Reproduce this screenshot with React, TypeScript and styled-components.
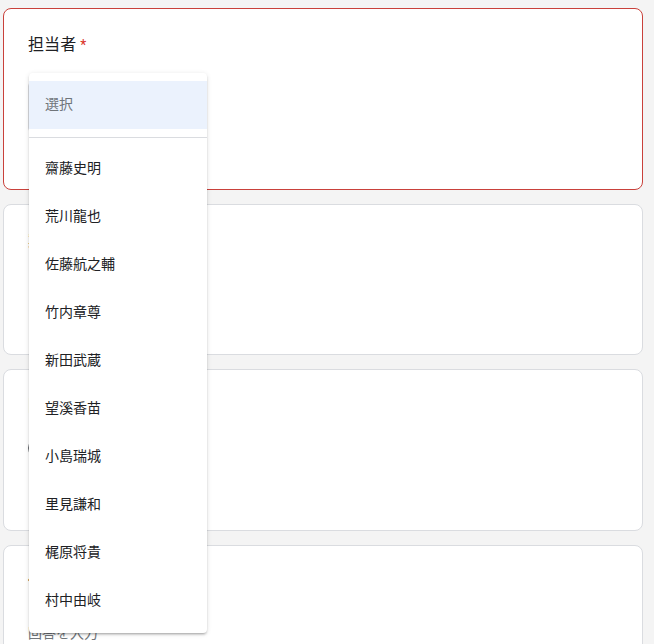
import React from 'react';
import styled, { createGlobalStyle } from 'styled-components';

const GlobalStyle = createGlobalStyle`
  html, body {
    margin: 0;
    padding: 0;
    background: #f4f4f4;
    overflow: hidden;
  }
  body {
    font-family: Roboto, "Noto Sans CJK JP", "Noto Sans", sans-serif;
    color: #202124;
  }
`;

const Page = styled.div`
  width: 640px;
  height: 644px;
  padding: 8px 11px 0 3px;
  display: flex;
  flex-direction: column;
  gap: 14px;
  position: relative;
  overflow: hidden;
`;

const Card = styled.section<{ $error?: boolean; $height?: number }>`
  flex-shrink: 0;
  box-sizing: border-box;
  height: ${(p) => (p.$height ? `${p.$height}px` : 'auto')};
  background: #fff;
  border: 1px solid ${(p) => (p.$error ? '#c9413b' : '#dadce0')};
  border-radius: 8px;
  padding: 24px;
  display: flex;
  flex-direction: column;
`;

const Title = styled.div`
  font-size: 16px;
  line-height: 24px;
  letter-spacing: 0.1px;
  color: #202124;
`;

const Required = styled.span`
  color: #d93025;
  font-size: 14px;
  margin-left: 4px;
`;

const SelectBox = styled.div`
  margin-top: 25px;
  width: 176px;
  height: 48px;
  border: 1px solid #dadce0;
  border-radius: 4px;
`;

const Answer = styled.div`
  margin-top: 16px;
  width: 50%;
  padding: 13px 0 8px;
  font-size: 14px;
  line-height: 20px;
  color: #70757a;
`;

const Option = styled.label`
  margin-top: 10px;
  display: flex;
  align-items: center;
  gap: 12px;
  height: 40px;
  font-size: 14px;
`;

const Radio = styled.span`
  width: 16px;
  height: 16px;
  border: 2px solid #5f6368;
  border-radius: 50%;
`;

const Menu = styled.ul`
  position: absolute;
  left: 29px;
  top: 73px;
  width: 178px;
  margin: 0;
  padding: 8px 0;
  list-style: none;
  background: #fff;
  border-radius: 4px;
  box-shadow: 0 2px 2px rgba(0, 0, 0, 0.14), 0 1px 5px rgba(0, 0, 0, 0.12),
    0 3px 1px -2px rgba(0, 0, 0, 0.1);
  z-index: 5;
`;

const MenuItem = styled.li<{ $placeholder?: boolean }>`
  height: 48px;
  display: flex;
  align-items: center;
  padding: 0 16px;
  font-size: 14px;
  line-height: 20px;
  padding-bottom: 2px;
  box-sizing: border-box;
  color: ${(p) => (p.$placeholder ? '#70757a' : '#202124')};
  background: ${(p) => (p.$placeholder ? '#ebf2fd' : 'transparent')};
`;

const Divider = styled.li`
  height: 1px;
  background: #dadce0;
  margin: 8px 0 7px;
`;

const names = [
  '齋藤史明',
  '荒川龍也',
  '佐藤航之輔',
  '竹内章尊',
  '新田武蔵',
  '望溪香苗',
  '小島瑞城',
  '里見謙和',
  '梶原将貴',
  '村中由岐',
];

export default function App() {
  return (
    <>
      <GlobalStyle />
      <Page>
        <Card $error $height={182}>
          <Title>
            担当者<Required>*</Required>
          </Title>
          <SelectBox />
        </Card>
        <Card $height={151}>
          <Title>
            案件名<Required>*</Required>
          </Title>
        </Card>
        <Card $height={162}>
          <Title>
            区分<Required>*</Required>
          </Title>
          <Option>
            <Radio />
            新規
          </Option>
        </Card>
        <Card $height={160}>
          <Title>備考</Title>
          <Answer>回答を入力</Answer>
        </Card>
        <Menu>
          <MenuItem $placeholder>選択</MenuItem>
          <Divider />
          {names.map((n) => (
            <MenuItem key={n}>{n}</MenuItem>
          ))}
        </Menu>
      </Page>
    </>
  );
}
